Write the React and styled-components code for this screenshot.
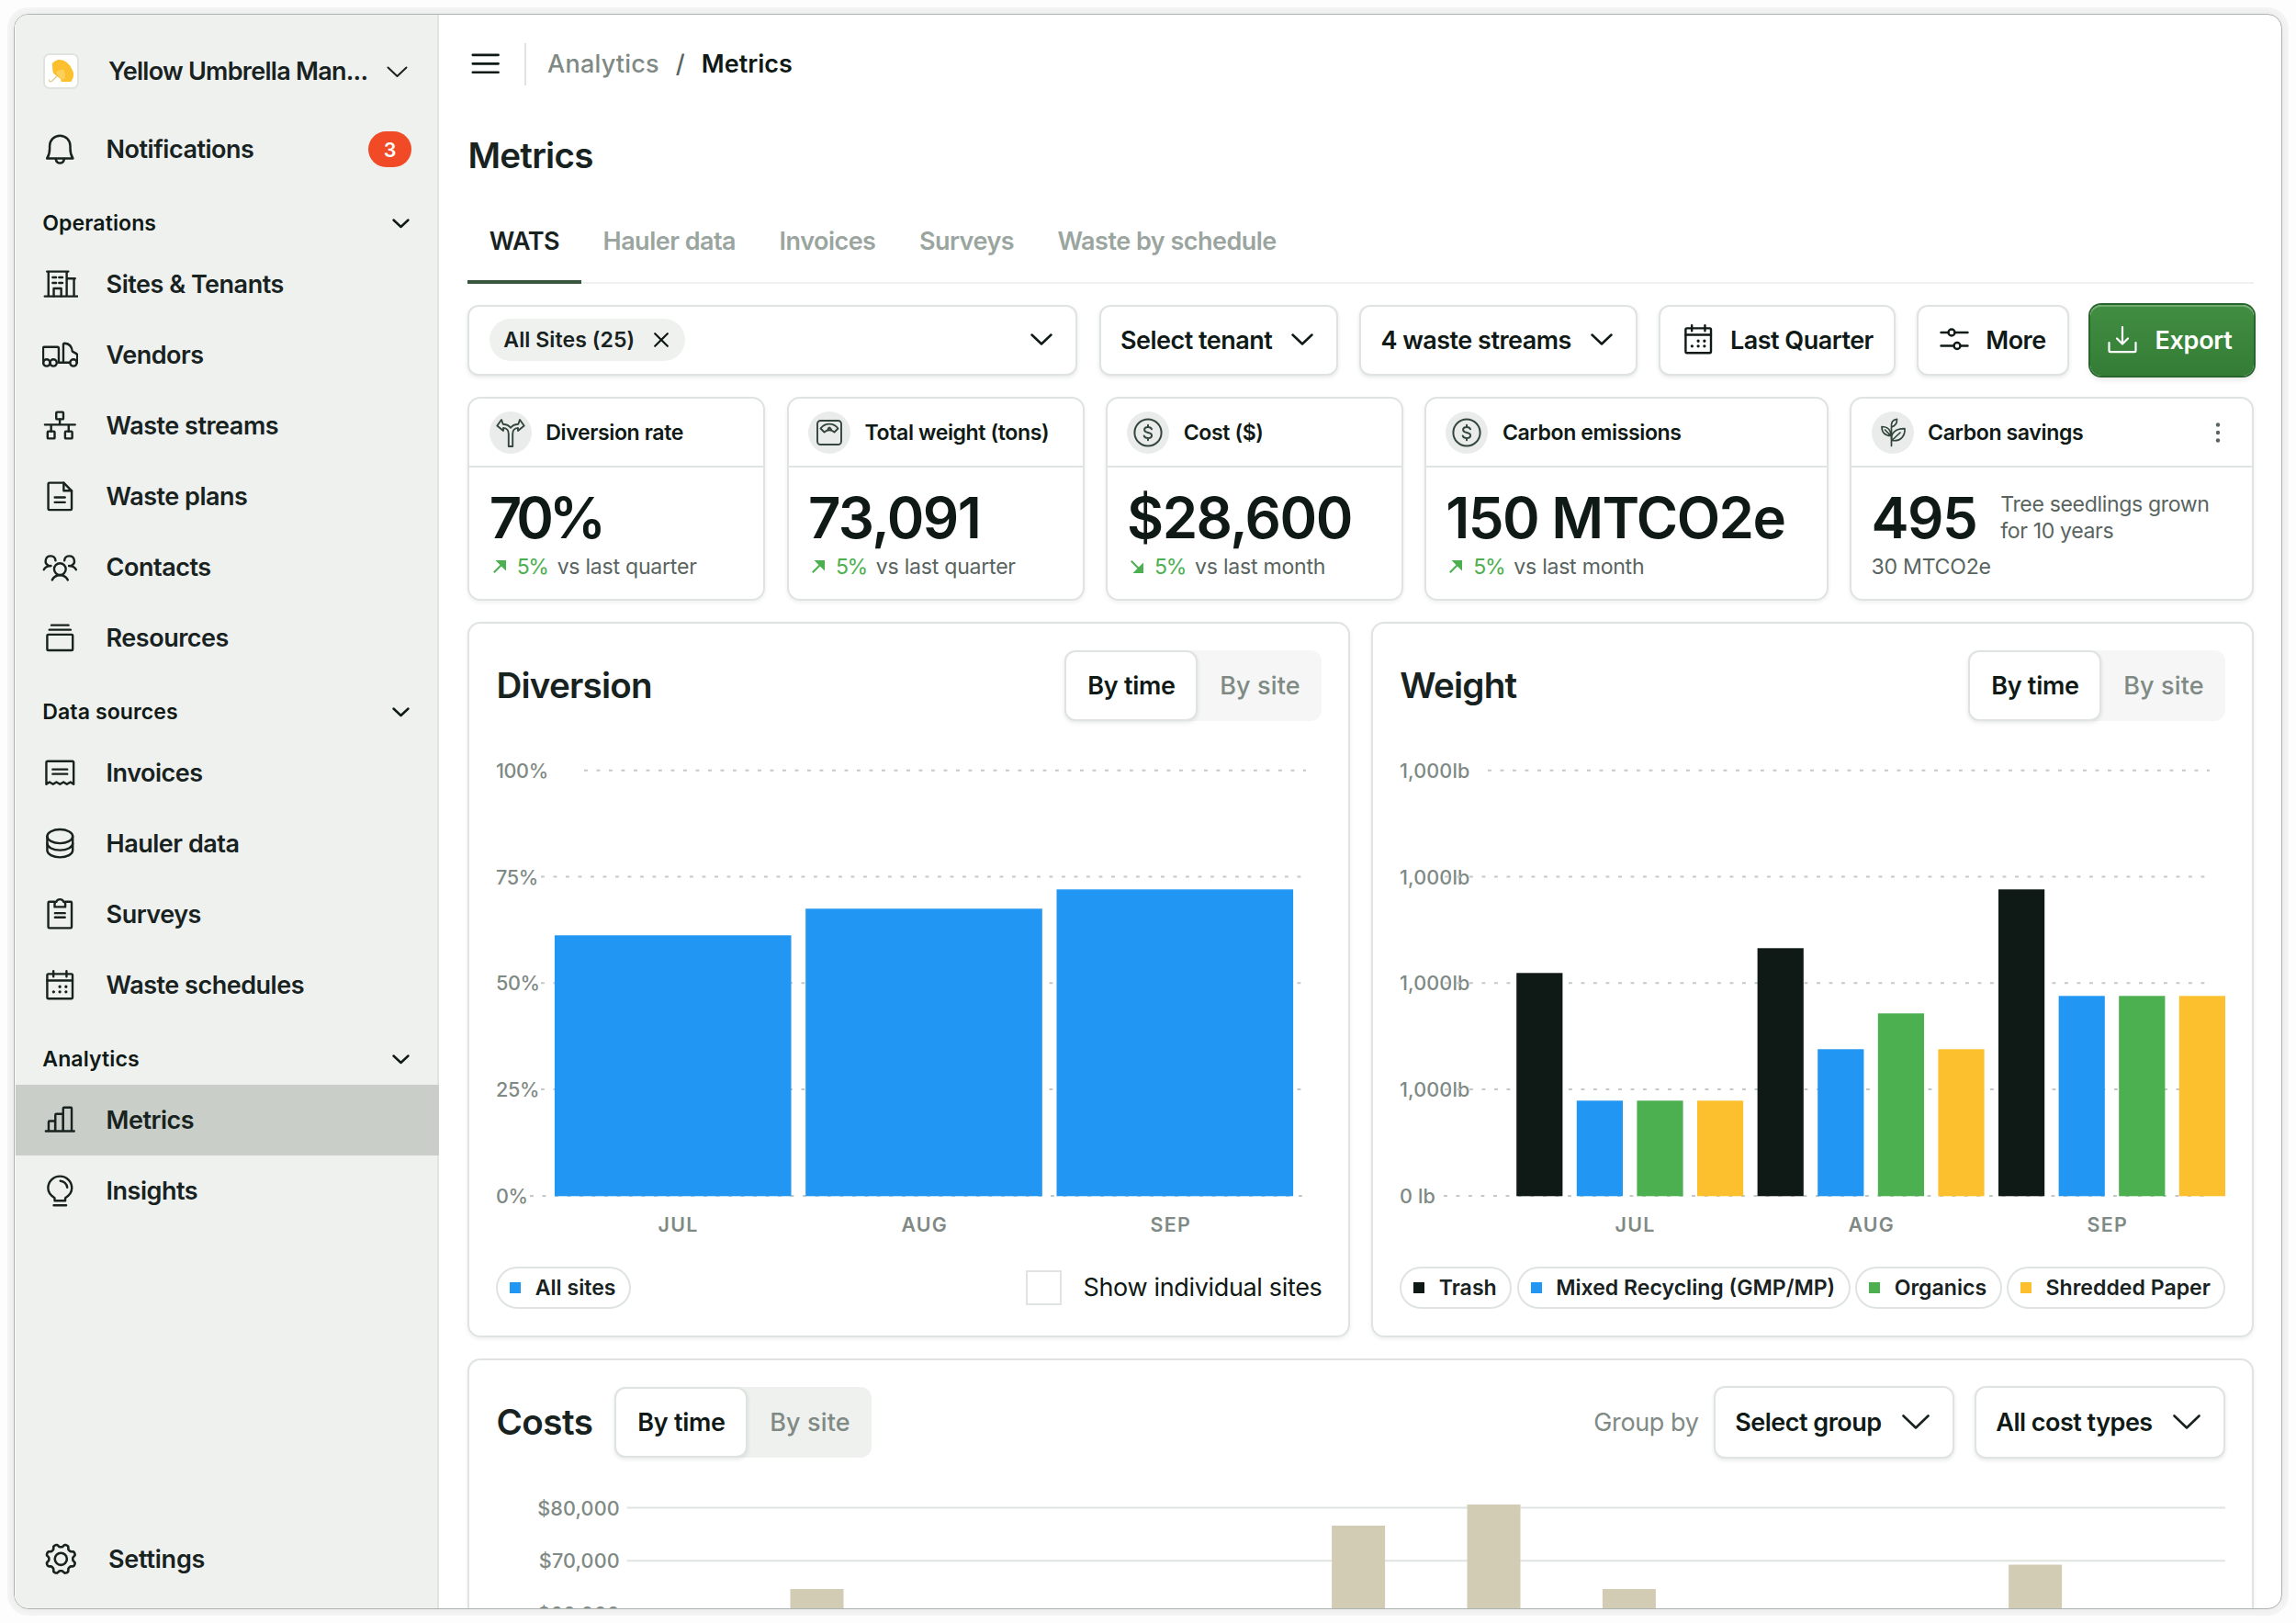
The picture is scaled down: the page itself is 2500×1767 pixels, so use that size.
import React from 'react'
import styled, { createGlobalStyle, css } from 'styled-components'

const theme = {
	ink: '#0f1915',
	text: '#18221f',
	muted: '#7f8a85',
	soft: '#9aa5a0',
	grey: '#59645f',
	line: '#dfe4e1',
	side: '#eff1ef',
	sideActive: '#c9cfc8',
	green: '#4caf50',
	blue: '#2196f3',
	yellow: '#fcc02e',
	sand: '#d3ccb4',
	red: '#f04a26',
}

const GlobalStyle = createGlobalStyle`
	* {
		box-sizing: border-box;
	}

	body {
		margin: 0;
		background: #fdfdfd;
		color: ${theme.text};
		font-family: Inter, 'Liberation Sans', sans-serif;
		font-size: 27px;
		font-weight: 600;
		letter-spacing: -0.019em;
	}

	svg {
		display: block;
		flex: none;
	}

	button {
		font: inherit;
		letter-spacing: inherit;
		color: inherit;
		border: 0;
		background: none;
		padding: 0;
		white-space: nowrap;
	}
`

const Page = styled.div`
	height: 1767px;
	padding: 15px;
	overflow: hidden;
`

const Window = styled.div`
	width: 2470px;
	height: 1737px;
	display: flex;
	overflow: hidden;
	background: #fff;
	border: 1px solid #adb3b0;
	border-radius: 16px;
	box-shadow: 0 0 0 7px rgba(0, 0, 0, 0.03), 0 0 12px rgba(0, 0, 0, 0.06);
`

/* ---------- sidebar ---------- */

const Sidebar = styled.aside`
	width: 462.4px;
	flex: none;
	display: flex;
	flex-direction: column;
	padding: 23.4px 0 15px;
	background: ${theme.side};
	border-right: 2px solid ${theme.line};
	border-left: 1px solid #f7f8f7;
`

const NavRow = styled.a`
	height: 77.14px;
	flex: none;
	display: flex;
	align-items: center;
	padding: 0 28.9px 0 29.1px;
	white-space: nowrap;
	letter-spacing: -0.018em;
	background: ${p => (p.$active ? theme.sideActive : 'transparent')};
	margin-right: ${p => (p.$active ? '-2px' : '0')};

	> svg {
		margin-right: 30.9px;
	}
`

const AccountRow = styled(NavRow)`
	margin-bottom: 7.7px;
	padding: 0 32.5px 0 29.9px;
	letter-spacing: -0.027em;

	> svg {
		margin: 2px 0 0 auto;
	}
`

const SettingsRow = styled(NavRow)`
	margin-top: auto;
	padding-left: 30.3px;
	letter-spacing: -0.008em;

	> svg {
		margin-right: 32px;
	}
`

const AccountLogo = styled.div`
	width: 39px;
	height: 39px;
	display: flex;
	align-items: center;
	justify-content: center;
	margin-right: 32px;
	background: #fff;
	border: 2px solid ${theme.line};
	border-radius: 7px;
`

const NavHeading = styled.div`
	height: 69.4px;
	flex: none;
	display: flex;
	align-items: center;
	justify-content: space-between;
	padding: 14.6px 30.5px 0 29.3px;
	font-size: 23.1px;
	letter-spacing: 0.003em;
	color: ${theme.ink};
`

const Badge = styled.span`
	width: 46.5px;
	height: 39px;
	display: flex;
	align-items: center;
	justify-content: center;
	margin-left: auto;
	border-radius: 20px;
	background: ${theme.red};
	color: #fff;
	font-size: 21.5px;
`

/* ---------- main ---------- */

const Main = styled.main`
	flex: 1;
	min-width: 0;
	padding: 0 29.7px 0 31.1px;
`

const TopBar = styled.header`
	height: 107.5px;
	display: flex;
	align-items: center;
	color: ${theme.ink};
	letter-spacing: 0;
`

const TopDivider = styled.div`
	width: 2px;
	height: 46px;
	margin: 0 23px;
	background: ${theme.line};
`

const Crumb = styled.span`
	font-weight: ${p => (p.$current ? 600 : 500)};
	letter-spacing: ${p => (p.$current ? '0' : '0.008em')};
	color: ${p => (p.$current ? theme.ink : theme.muted)};
`

const CrumbSlash = styled.span`
	margin: 0 18px;
	font-weight: 500;
	color: ${theme.grey};
`

const PageTitle = styled.h1`
	height: 92.6px;
	margin: 0;
	padding-bottom: 2px;
	display: flex;
	align-items: center;
	font-size: 38.6px;
	font-weight: 600;
	letter-spacing: -0.02em;
`

const Tabs = styled.nav`
	height: 92.6px;
	display: flex;
	box-shadow: inset 0 -2px 0 #eff1ef;
`

const Tab = styled.a`
	display: flex;
	align-items: center;
	padding: 4px 24.3px 0 23.2px;
	color: ${p => (p.$active ? theme.text : theme.soft)};
	border-bottom: 4px solid ${p => (p.$active ? '#36573c' : 'transparent')};
`

const Filters = styled.div`
	display: flex;
	justify-content: space-between;
	margin: 23.1px 0;
	color: ${theme.ink};
`

const Button = styled.button`
	width: ${p => p.$width}px;
	height: ${p => p.$height || 77.1}px;
	display: flex;
	align-items: center;
	justify-content: ${p => (p.$center ? 'center' : 'space-between')};
	gap: ${p => p.$gap || 0}px;
	padding: ${p => (p.$center ? '0' : '0 25px 0 21.4px')};
	background: #fff;
	border: 2px solid ${theme.line};
	border-radius: 12px;
	box-shadow: 0 2px 4px rgba(24, 34, 31, 0.1);

	${p =>
		p.$primary &&
		css`
			padding-right: 4px;
			color: #fff;
			letter-spacing: -0.01em;
			background: linear-gradient(#418e42, #347c36);
			border: 0;
			box-shadow: 0 0 0 2px #27662b, inset 0 2px 0 rgba(255, 255, 255, 0.25),
				0 4px 6px rgba(24, 34, 31, 0.12);
		`}
`

const Chip = styled.span`
	height: 46.3px;
	display: flex;
	align-items: center;
	gap: 20.5px;
	padding: 0 18.5px 0 15.4px;
	border-radius: 24px;
	background: ${theme.side};
	font-size: 23.1px;
	letter-spacing: 0.003em;
	color: ${theme.text};
`

const Summary = styled.section`
	display: grid;
	grid-template-columns: 324px 324px 324px 440px 440px;
	justify-content: space-between;
	margin-bottom: 23.1px;
`

const Card = styled.article`
	background: #fff;
	border: 2px solid ${theme.line};
	border-radius: 14px;
	box-shadow: 0 2px 4px rgba(24, 34, 31, 0.07);
`

const SummaryCard = styled(Card)`
	height: 221.8px;
`

const SummaryHead = styled.div`
	height: 75.5px;
	display: flex;
	align-items: center;
	gap: 15.4px;
	padding: 0 27px 0 21.4px;
	border-bottom: 2px solid ${theme.line};
	color: ${theme.ink};
	font-size: 23.1px;
	letter-spacing: -0.017em;

	> svg:last-child {
		margin-left: auto;
	}
`

const RoundIcon = styled.span`
	width: 46px;
	height: 46px;
	display: flex;
	align-items: center;
	justify-content: center;
	border-radius: 50%;
	background: #e9ecea;
`

const SummaryBody = styled.div`
	padding: 18.5px 21.2px 0;
	color: ${theme.grey};
	font-size: 23.1px;
	font-weight: 400;
	letter-spacing: -0.016em;
`

const SummaryValue = styled.div`
	display: flex;
	align-items: center;
	gap: 26px;
	height: 72px;
	white-space: nowrap;

	strong {
		font-size: 61.7px;
		font-weight: 600;
		letter-spacing: ${p => (p.$tight ? '-0.08em' : '-0.025em')};
		color: ${theme.ink};
	}

	span {
		line-height: 28.9px;
	}
`

const Trend = styled.div`
	display: flex;
	align-items: center;
	height: 34px;
	letter-spacing: -0.011em;

	svg {
		margin: 0 12px 0 4px;
	}

	em {
		margin-right: 10px;
		font-style: normal;
		letter-spacing: -0.06em;
		color: ${theme.green};
	}
`

const Charts = styled.section`
	display: flex;
	gap: 23.1px;
	margin-bottom: 23.1px;
`

const Panel = styled(Card)`
	flex: 1;
	min-width: 0;
	height: ${p => p.$height}px;
	padding: 28.9px 28.9px 0;
`

const PanelHead = styled.div`
	height: 77.1px;
	display: flex;
	align-items: center;
`

const PanelTitle = styled.h2`
	margin: 0 ${p => (p.$inline ? '24px' : 'auto')} 0 0;
	font-size: 38.6px;
	font-weight: 600;
	letter-spacing: ${p => (p.$inline ? '-0.013em' : '-0.02em')};
`

const Toggle = styled.div`
	width: 280px;
	height: 77.1px;
	display: flex;
	border-radius: 12px;
	background: ${p => p.$tint || '#f5f6f5'};
`

const ToggleItem = styled.button`
	width: ${p => (p.$active ? 145 : 135)}px;
	font-weight: 500;
	letter-spacing: 0.005em;
	color: ${theme.muted};

	${p =>
		p.$active &&
		css`
			font-weight: 600;
			letter-spacing: -0.01em;
			color: ${theme.ink};
			background: #fff;
			border: 2px solid ${theme.line};
			border-radius: 12px;
			box-shadow: 0 2px 4px rgba(24, 34, 31, 0.1);
		`}
`

const Legend = styled.div`
	display: flex;
	align-items: center;
	justify-content: space-between;
	margin-top: 19px;
	height: 46px;
`

const LegendItem = styled.span`
	height: 46px;
	display: flex;
	align-items: center;
	gap: 15.4px;
	padding: 0 14.5px 0 13px;
	border: 2px solid ${theme.line};
	border-radius: 23px;
	font-size: 23.1px;
	letter-spacing: 0;
	white-space: nowrap;

	&:before {
		content: '';
		width: 12px;
		height: 12px;
		background: ${p => p.$color};
	}
`

const Check = styled.label`
	display: flex;
	align-items: center;
	gap: 23.5px;
	color: ${theme.ink};
	font-weight: 400;
	letter-spacing: -0.0125em;

	i {
		width: 38.6px;
		height: 38.6px;
		border: 2px solid ${theme.line};
		background: #fff;
	}
`

const CostControls = styled.div`
	display: flex;
	align-items: center;
	margin-left: auto;
	gap: 21.5px;
	color: ${theme.ink};
`

const GroupLabel = styled.span`
	margin-right: -5px;
	color: ${theme.muted};
	font-weight: 400;
	letter-spacing: -0.015em;
`

const ChartSvg = styled.svg`
	overflow: visible;

	text {
		fill: ${theme.muted};
		font-size: 21.6px;
		font-weight: 500;
		letter-spacing: ${p => (p.$percent ? '-0.018em' : '0.006em')};
	}

	text.month {
		font-weight: 600;
		font-size: 21.4px;
		letter-spacing: 0.06em;
		text-anchor: middle;
	}

	text.end {
		text-anchor: end;
	}
`

/* ---------- icons ---------- */

const Icon = ({ size = 38.6, box = 20, stroke = 1.3, color = theme.text, children }) => (
	<svg
		width={size}
		height={size}
		viewBox={`0 0 ${box} ${box}`}
		fill='none'
		stroke={color}
		strokeWidth={stroke}
		strokeLinecap='round'
		strokeLinejoin='round'
	>
		{children}
	</svg>
)

const Chevron = ({ width = 22, stroke = 2.5, color = theme.ink }) => (
	<svg
		width={width + 2}
		height={width / 2 + 3}
		viewBox={`-1 -1 ${width + 2} ${width / 2 + 3}`}
		fill='none'
		stroke={color}
		strokeWidth={stroke}
		strokeLinecap='round'
		strokeLinejoin='round'
	>
		<path d={`M.5.5 ${width / 2} ${width / 2 - 0.5} ${width - 0.5}.5`} />
	</svg>
)

const Umbrella = () => (
	<svg width='29' height='29' viewBox='0 0 29 29'>
		<path
			d='M4.700 6.500 C6 4 8 3.500 10.700 2.200 C14 1.800 17 2.600 19.700 4.200 C23 6.500 25 9 26.300 12.500 C28 15 28.300 17 28 19.200 C27.800 22 26.500 24 25.300 26 L14.700 26 L14 23 L6.300 17 C4.500 13 5.500 10 4.700 6.500 Z'
			fill='#fcc02e'
		/>
		<path d='M9 16c2-2 5-3.500 8-3.500 2 3 2.500 7 1.500 10.500l-4 .5Z' fill='#fdd05a' />
		<path
			d='M10 20 4.500 25.200C2.800 26.500 1.200 25.800 1.300 24'
			fill='none'
			stroke='#d9c98f'
			strokeWidth='1.2'
			strokeLinecap='round'
		/>
	</svg>
)

const BellIcon = () => (
	<Icon>
		<path d='M2.700 15.300c1.300-2 1.500-3.700 1.500-5.600V8.200a5.800 5.800 0 0 1 11.600 0v1.500c0 1.900.2 3.600 1.500 5.600Z' />
		<path d='M7.600 15.500c.3 1.600 1.200 2.400 2.400 2.400s2.100-.8 2.400-2.400' />
	</Icon>
)

const BuildingIcon = () => (
	<Icon stroke={1.25}>
		<path d='M1.400 16.900h18.400M2.700 2.900h12M3.500 2.900v14M13.800 2.900v14M13.800 6.900h4.700M17.900 6.900v10' />
		<path d='M6.500 16.900v-4.500h4.200v4.500M5.900 6.200h1.900M9.500 6.200h1.900M5.900 9.300h1.900M9.500 9.300h1.900' />
	</Icon>
)

const TruckIcon = () => (
	<Icon stroke={1.25}>
		<path d='M.5 14.400V6.300a.7.700 0 0 1 .7-.7h7.400a.7.700 0 0 1 .7.7v8.100M9.300 14.400h6.100M11.900 14.400V4.300c0-.5.300-.8.800-.8 2.600.2 4 1.900 4.300 4.600l1.900 1c.6.300.9.8.9 1.400v3.900' />
		<circle cx='2.500' cy='14.500' r='1.900' />
		<circle cx='6.300' cy='14.500' r='1.900' />
		<circle cx='17.600' cy='14.500' r='1.900' />
	</Icon>
)

const StreamsIcon = () => (
	<Icon stroke={1.25}>
		<rect x='7.900' y='2.400' width='4' height='4' rx='.5' />
		<rect x='3' y='13.300' width='4' height='4' rx='.5' />
		<rect x='12.900' y='13.300' width='4' height='4' rx='.5' />
		<path d='M9.900 6.400v3.100M1.500 9.500h17M5 9.500v3.800M14.900 9.500v3.800' />
	</Icon>
)

const DocIcon = () => (
	<Icon stroke={1.25}>
		<path d='M4 2.400h8.100l4.500 4.500v10.200a.6.600 0 0 1-.6.600H4a.6.600 0 0 1-.6-.6V3a.6.600 0 0 1 .6-.6Z' />
		<path d='M12.100 2.400v4.500h4.500M7.100 10.600h5.700M7.100 13.400h5.700' />
	</Icon>
)

const ContactsIcon = () => (
	<Icon stroke={1.25}>
		<circle cx='10' cy='11.200' r='3.300' />
		<path d='M5.600 17.300c.8-1.700 2.400-2.700 4.400-2.700s3.600 1 4.400 2.700' />
		<path d='M7.500 6.400A2.800 2.800 0 1 0 3.600 9.200c.4.200.8.300 1.300.2M.9 11.500C1.500 10.200 2.800 9.400 4.900 9.300' />
		<path d='M12.500 6.400a2.800 2.800 0 1 1 3.900 2.800c-.4.200-.8.300-1.300.2M19.100 11.500c-.6-1.300-1.900-2.100-4-2.200' />
	</Icon>
)

const ResourcesIcon = () => (
	<Icon stroke={1.25}>
		<path d='M5.200 2.400h9.600M4 5h12' />
		<rect x='2.800' y='7.700' width='14.400' height='8.900' rx='.6' />
	</Icon>
)

const InvoiceIcon = () => (
	<Icon stroke={1.25}>
		<path d='M2.300 16.500V4.200c0-.4.300-.7.700-.7h14c.4 0 .7.300.7.700v12.300l-1.800-1.200-2 1.200-1.900-1.200-2 1.200-2-1.200-1.900 1.200-2-1.200Z' />
		<path d='M5.900 8.100h8.200M5.900 10.700h8.200' />
	</Icon>
)

const DatabaseIcon = () => (
	<Icon stroke={1.25}>
		<ellipse cx='10' cy='6' rx='7.200' ry='3.900' />
		<path d='M2.800 6v7.900c0 2.100 3.200 3.900 7.200 3.900s7.200-1.800 7.200-3.900V6' />
		<path d='M2.800 10c0 2.100 3.200 3.800 7.200 3.800s7.200-1.700 7.200-3.800' />
	</Icon>
)

const SurveyIcon = () => (
	<Icon stroke={1.25}>
		<path d='M6.900 3H4a.6.600 0 0 0-.6.600v13.600c0 .3.300.6.600.6h12c.3 0 .6-.3.600-.6V3.600A.6.600 0 0 0 16 3h-2.900' />
		<path d='M7 5.900V4.100c0-.6.400-1.100 1-1.100.2-.9 1-1.400 2-1.400s1.800.5 2 1.400c.6 0 1 .5 1 1.100v1.800ZM7.200 9.400h5.600M7.200 11.800h5.600' />
	</Icon>
)

const CalendarIcon = props => (
	<Icon stroke={1.25} {...props}>
		<rect x='2.800' y='3.300' width='14.300' height='13.900' rx='.7' />
		<path d='M2.800 7h14.300M6.300 1.700v3.100M13.700 1.700v3.100' />
		<g strokeWidth='1.700'>
			<path d='M9.900 10.500h.01M13.400 10.500h.01M6.400 13.400h.01M9.900 13.400h.01M13.400 13.400h.01' />
		</g>
	</Icon>
)

const MetricsIcon = () => (
	<Icon stroke={1.25}>
		<path d='M2 16.300h16M3.600 16.300v-5.200c0-.3.200-.5.500-.5h3.200v5.700M7.400 16.300V7.100c0-.3.200-.5.500-.5h3.800v9.700M11.800 16.300V3.500c0-.3.200-.5.500-.5h3.800c.3 0 .5.200.5.500v12.800' />
	</Icon>
)

const BulbIcon = () => (
	<Icon stroke={1.25}>
		<path d='M7 15.700v-1.600C4.800 12.800 3.300 10.900 3.300 8.600a6.700 6.700 0 1 1 13.400 0c0 2.300-1.500 4.200-3.700 5.500v1.600ZM6.500 18.300h7M10.200 4.500c2 .1 3.700 1.700 3.900 3.700' />
	</Icon>
)

const gear = Array.from({ length: 97 }, (_, i) => {
	const a = (i / 96) * Math.PI * 2
	const r = 7.55 + 0.85 * Math.tanh(2 * Math.cos(8 * a + Math.PI))
	return `${(10 + r * Math.cos(a)).toFixed(2)} ${(10 + r * Math.sin(a)).toFixed(2)}`
}).join('L')

const SettingsIcon = () => (
	<Icon stroke={1.35}>
		<path d={`M${gear}Z`} />
		<circle cx='10' cy='10' r='3.400' />
	</Icon>
)

const MenuIcon = () => (
	<Icon color={theme.ink} stroke={1.4}>
		<path d='M3 5.100h14.400M3 10h14.400M3 14.900h14.400' />
	</Icon>
)

const CloseIcon = () => (
	<Icon size={16} box={16} stroke={2.2} color={theme.ink}>
		<path d='m1.200 1.200 13.600 13.600M14.800 1.200 1.200 14.800' />
	</Icon>
)

const SlidersIcon = () => (
	<Icon size={32} box={32} stroke={2.4} color={theme.ink}>
		<path d='M1.500 8h8M16.500 8h14M1.500 22.500h14M22.500 22.500h8' />
		<circle cx='13' cy='8' r='3.500' />
		<circle cx='19' cy='22.500' r='3.500' />
	</Icon>
)

const ExportIcon = () => (
	<Icon size={32} box={32} stroke={2.2} color='#fff'>
		<path d='M1.500 19v9c0 .8.400 1.200 1.200 1.200h26.600c.8 0 1.200-.4 1.200-1.200v-9M16 2v18M10 14.500l6 6 6-6' />
	</Icon>
)

const ForkIcon = () => (
	<Icon size={32} box={32} stroke={1.9} color='#33453c'>
		<path d='M13.800 31V17.500c0-4-2-6.300-5.800-6.600v3L1.300 8.500 6 2l1.700 4.700c3.800.3 6.500 1.500 8.300 4 1.800-2.500 4.500-3.700 8.300-4L26 2l4.700 6.500L24 13.900v-3c-3.800.3-5.800 2.600-5.800 6.600V31Z' />
	</Icon>
)

const ScaleIcon = () => (
	<Icon size={32} box={32} stroke={1.9} color='#33453c'>
		<rect x='3' y='3' width='26' height='26' rx='3.500' />
		<path d='M6.500 11.500C9 8 12 6.600 16 6.600s7 1.400 9.500 4.900L21.500 15.500c-1.500-1.500-3.300-2.300-5.500-2.300s-4 .8-5.500 2.300ZM14 13.500l1.500-2.800M16.500 10.500l2.500 3.500' />
	</Icon>
)

const DollarIcon = () => (
	<Icon size={32} box={32} stroke={2} color='#33453c'>
		<circle cx='16' cy='16' r='14.600' />
		<path d='M20 12.300c-.5-1.500-2-2.300-4-2.300-2.300 0-3.900 1.200-3.900 3 0 4.200 8 1.800 8 6 0 1.800-1.700 3-4.100 3-2.200 0-3.800-.9-4.300-2.500M16 7.700V10M16 22v2.300' />
	</Icon>
)

const LeafIcon = () => (
	<Icon size={32} box={32} stroke={1.7} color='#33453c'>
		<path d='M14.500 30.500V10M14.500 9.800c-.6-4.500 1.500-7.800 6-8.500.2 4.500-1.500 7.500-6 8.500Z' />
		<path d='M14 19.500C7.500 19.500 4 16 4 9.500c6 0 10 3.500 10 10ZM7.500 13l6.500 6.500' />
		<path d='M15 24.500c-2-8 4-13 14-12.800.5 8.300-5 14.300-14 12.800ZM15.500 24 24 16' />
	</Icon>
)

const KebabIcon = () => (
	<svg width='20' height='24' viewBox='0 0 20 24' fill={theme.grey}>
		<circle cx='10' cy='3.500' r='2.200' />
		<circle cx='10' cy='12' r='2.200' />
		<circle cx='10' cy='20.500' r='2.200' />
	</svg>
)

const TrendArrow = ({ down }) => (
	<svg width='14' height='14' viewBox='0 0 14 14'>
		<g transform={down ? 'matrix(1 0 0 -1 0 14)' : undefined}>
			<path d='M2.500 0H14v11.500l-4.600-4.600Z' fill={theme.green} />
			<path d='M10 4 .8 13.200' stroke={theme.green} strokeWidth='2' />
		</g>
	</svg>
)

/* ---------- data ---------- */

const operations = [
	['Sites & Tenants', BuildingIcon],
	['Vendors', TruckIcon],
	['Waste streams', StreamsIcon],
	['Waste plans', DocIcon],
	['Contacts', ContactsIcon],
	['Resources', ResourcesIcon],
]

const dataSources = [
	['Invoices', InvoiceIcon],
	['Hauler data', DatabaseIcon],
	['Surveys', SurveyIcon],
	['Waste schedules', CalendarIcon],
]

const analytics = [
	['Metrics', MetricsIcon],
	['Insights', BulbIcon],
]

const tabs = ['WATS', 'Hauler data', 'Invoices', 'Surveys', 'Waste by schedule']

const summary = [
	{ title: 'Diversion rate', icon: ForkIcon, value: '70%', versus: 'vs last quarter', tight: true },
	{ title: 'Total weight (tons)', icon: ScaleIcon, value: '73,091', versus: 'vs last quarter' },
	{ title: 'Cost ($)', icon: DollarIcon, value: '$28,600', versus: 'vs last month', down: true },
	{ title: 'Carbon emissions', icon: DollarIcon, value: '150 MTCO2e', versus: 'vs last month' },
]

const streams = [
	['Trash', theme.ink],
	['Mixed Recycling (GMP/MP)', theme.blue],
	['Organics', theme.green],
	['Shredded Paper', theme.yellow],
]

const STEP = 115.8
const BASE = 517.3
const gridY = i => 53.7 + i * STEP

const weights = [
	[243, 104, 104, 104],
	[270, 160, 199, 160],
	[334, 218, 218, 218],
]

/* ---------- sections ---------- */

const NavGroup = ({ title, items, active }) => (
	<>
		<NavHeading>
			{title}
			<Chevron width={17} stroke={2.4} />
		</NavHeading>
		{items.map(([label, Glyph]) => (
			<NavRow key={label} $active={label === active}>
				<Glyph />
				{label}
			</NavRow>
		))}
	</>
)

const GridLines = ({ labels, starts, ends }) =>
	labels.map((label, i) => (
		<g key={i}>
			<text x='0' y={gridY(i) + 8}>
				{label}
			</text>
			<line
				x1={starts[i]}
				x2={ends[i]}
				y1={gridY(i)}
				y2={gridY(i)}
				stroke='#c3c9c6'
				strokeWidth='2'
				strokeDasharray='3.86 9.64'
			/>
		</g>
	))

const DiversionChart = () => (
	<ChartSvg $percent width='898' height='575' viewBox='0 0 898 575'>
		<GridLines
			labels={['100%', '75%', '50%', '25%', '0%']}
			starts={[96, 49, 49, 49, 37]}
			ends={[882, 878, 878, 878, 878]}
		/>
		{[284, 313, 334].map((h, i) => (
			<rect key={i} x={63.9 + i * 273.3} y={BASE - h} width='257.6' height={h} fill={theme.blue} />
		))}
		<text className='month' x='198.5' y='556'>JUL</text>
		<text className='month' x='466.8' y='556'>AUG</text>
		<text className='month' x='734.8' y='556'>SEP</text>
	</ChartSvg>
)

const WeightChart = () => (
	<ChartSvg width='898' height='575' viewBox='0 0 898 575'>
		<GridLines
			labels={['1,000lb', '1,000lb', '1,000lb', '1,000lb', '0 lb']}
			starts={[96, 49, 49, 49, 48]}
			ends={[882, 878, 878, 878, 880]}
		/>
		{weights.map((group, g) =>
			group.map((h, i) => (
				<rect
					key={`${g}-${i}`}
					x={127.2 + (g * 4 + i) * 65.6}
					y={BASE - h}
					width='50.2'
					height={h}
					fill={streams[i][1]}
				/>
			))
		)}
		<text className='month' x='256.5' y='556'>JUL</text>
		<text className='month' x='513.8' y='556'>AUG</text>
		<text className='month' x='770.8' y='556'>SEP</text>
	</ChartSvg>
)

const CostsChart = () => (
	<ChartSvg width='1883' height='240' viewBox='0 0 1883 240'>
		{['$80,000', '$70,000', '$60,000'].map((label, i) => (
			<g key={label}>
				<text className='end' x='134.800' y={54.5 + i * 57.8 + 8}>
					{label}
				</text>
				<line x1='142.5' x2='1883' y1={54.5 + i * 57.8} y2={54.5 + i * 57.8} stroke={theme.line} strokeWidth='2' />
			</g>
		))}
		{[[0, 143], [4, 74], [5, 51], [6, 143], [9, 116.5]].map(([slot, top]) => (
			<rect key={slot} x={320.5 + slot * 147.4} y={top} width='58' height={240 - top} fill={theme.sand} />
		))}
	</ChartSvg>
)

const TimeToggle = ({ tint }) => (
	<Toggle $tint={tint}>
		<ToggleItem $active>By time</ToggleItem>
		<ToggleItem>By site</ToggleItem>
	</Toggle>
)

const App = () => (
	<Page>
		<GlobalStyle />
		<Window>
			<Sidebar>
				<AccountRow>
					<AccountLogo>
						<Umbrella />
					</AccountLogo>
					Yellow Umbrella Man...
					<Chevron width={21} stroke={2} color={theme.text} />
				</AccountRow>
				<NavRow>
					<BellIcon />
					Notifications
					<Badge>3</Badge>
				</NavRow>
				<NavGroup title='Operations' items={operations} />
				<NavGroup title='Data sources' items={dataSources} />
				<NavGroup title='Analytics' items={analytics} active='Metrics' />
				<SettingsRow>
					<SettingsIcon />
					Settings
				</SettingsRow>
			</Sidebar>

			<Main>
				<TopBar>
					<MenuIcon />
					<TopDivider />
					<Crumb>Analytics</Crumb>
					<CrumbSlash>/</CrumbSlash>
					<Crumb $current>Metrics</Crumb>
				</TopBar>
				<PageTitle>Metrics</PageTitle>
				<Tabs>
					{tabs.map((tab, i) => (
						<Tab key={tab} $active={i === 0}>
							{tab}
						</Tab>
					))}
				</Tabs>

				<Filters>
					<Button $width={664}>
						<Chip>
							All Sites (25)
							<CloseIcon />
						</Chip>
						<Chevron />
					</Button>
					<Button $width={260.4}>
						Select tenant
						<Chevron />
					</Button>
					<Button $width={303}>
						4 waste streams
						<Chevron />
					</Button>
					<Button $width={258} $center $gap={15}>
						<CalendarIcon color={theme.ink} />
						Last Quarter
					</Button>
					<Button $width={165.5} $center $gap={18}>
						<SlidersIcon />
						More
					</Button>
					<Button $width={178.5} $center $gap={19} $primary>
						<ExportIcon />
						Export
					</Button>
				</Filters>

				<Summary>
					{summary.map(({ title, icon: Glyph, value, versus, down, tight }) => (
						<SummaryCard key={title}>
							<SummaryHead>
								<RoundIcon>
									<Glyph />
								</RoundIcon>
								{title}
							</SummaryHead>
							<SummaryBody>
								<SummaryValue $tight={tight}>
									<strong>{value}</strong>
								</SummaryValue>
								<Trend>
									<TrendArrow down={down} />
									<em>5%</em>
									{versus}
								</Trend>
							</SummaryBody>
						</SummaryCard>
					))}
					<SummaryCard>
						<SummaryHead>
							<RoundIcon>
								<LeafIcon />
							</RoundIcon>
							Carbon savings
							<KebabIcon />
						</SummaryHead>
						<SummaryBody>
							<SummaryValue>
								<strong>495</strong>
								<span>
									Tree seedlings grown
									<br />
									for 10 years
								</span>
							</SummaryValue>
							<Trend>30 MTCO2e</Trend>
						</SummaryBody>
					</SummaryCard>
				</Summary>

				<Charts>
					<Panel $height={779.1}>
						<PanelHead>
							<PanelTitle>Diversion</PanelTitle>
							<TimeToggle />
						</PanelHead>
						<DiversionChart />
						<Legend>
							<LegendItem $color={theme.blue}>All sites</LegendItem>
							<Check>
								<i />
								Show individual sites
							</Check>
						</Legend>
					</Panel>
					<Panel $height={779.1}>
						<PanelHead>
							<PanelTitle>Weight</PanelTitle>
							<TimeToggle />
						</PanelHead>
						<WeightChart />
						<Legend>
							{streams.map(([label, color]) => (
								<LegendItem key={label} $color={color}>
									{label}
								</LegendItem>
							))}
						</Legend>
					</Panel>
				</Charts>

				<Panel $height={400}>
					<PanelHead>
						<PanelTitle $inline>Costs</PanelTitle>
						<TimeToggle tint='#eff1ef' />
						<CostControls>
							<GroupLabel>Group by</GroupLabel>
							<Button $width={262.5} $height={79}>
								Select group
								<Chevron width={28} stroke={2.6} color={theme.text} />
							</Button>
							<Button $width={273.5} $height={79}>
								All cost types
								<Chevron width={28} stroke={2.6} color={theme.text} />
							</Button>
						</CostControls>
					</PanelHead>
					<CostsChart />
				</Panel>
			</Main>
		</Window>
	</Page>
)

export default App
